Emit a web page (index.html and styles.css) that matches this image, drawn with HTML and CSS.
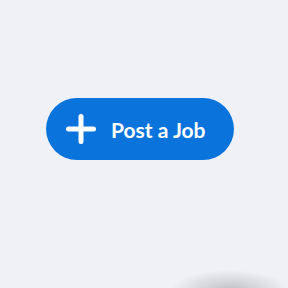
FILE: index.html
```html
<!DOCTYPE html>
<html>
<head>
<meta charset="utf-8">
<link rel="stylesheet" href="styles.css">
</head>
<body>
<div class="stage">
  <button class="post-btn">
    <svg class="plus" width="30" height="30" viewBox="0 0 30 30"><path d="M15 2.5V27.5M2.5 15H27.5" stroke="#fff" stroke-width="5" stroke-linecap="round" fill="none"/></svg>
    <span class="label">Post a Job</span>
  </button>
</div>
<div class="float-shadow"></div>
</body>
</html>
```
FILE: styles.css
```css
html, body {
  margin: 0;
  padding: 0;
  width: 288px;
  height: 288px;
  overflow: hidden;
  background: #eff1f6;
}
.stage {
  padding: 98px 0 0 46px;
}
.post-btn {
  display: flex;
  align-items: center;
  gap: 15px;
  width: 188px;
  height: 62px;
  padding: 0 0 0 20px;
  border: none;
  border-radius: 31px;
  background: #0a73dc;
  color: #fff;
  font-family: "Lato", "Liberation Sans", sans-serif;
  font-weight: 700;
  font-size: 21px;
  box-sizing: border-box;
}
.plus { display: block; flex: none; }
.label { display: block; line-height: 1; }
.float-shadow {
  position: absolute;
  left: 170px;
  top: 258px;
  width: 120px;
  height: 30px;
  background: radial-gradient(ellipse 50% 70% at 50% 110%, rgba(60,62,70,0.28), rgba(60,62,70,0) 100%);
}
```
